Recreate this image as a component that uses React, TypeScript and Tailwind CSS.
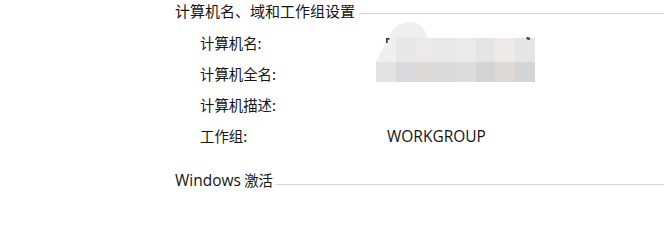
import React from "react";

const rows = [
  { label: "计算机名:", value: "" },
  { label: "计算机全名:", value: "" },
  { label: "计算机描述:", value: "" },
  { label: "工作组:", value: "WORKGROUP" },
];

function Redacted() {
  const xs = [6, 26, 46, 66, 86, 106, 125, 145, 165];
  const r1 = ["#eeeeee", "#e8e8e8", "#ebe9e9", "#e9e9ea", "#eaeaea", "#e4e6e6", "#eeeae9", "#e4e5e7"];
  const r2 = ["#e3e3e3", "#d9dadb", "#dcd9d8", "#d9dadc", "#dcdcdc", "#d3d5d5", "#ddd9d6", "#d3d6d9"];
  return (
    <svg className="absolute left-[370px] top-[20px]" width="170" height="65" viewBox="0 0 170 65">
      <path d="M6 42 L20 14 Q27 2 40 2 Q53 2 58 18 L58 42 Z" fill="#efefef" />
      {r1.map((c, i) =>
        i === 0 ? null : (
          <rect key={"a" + i} x={xs[i]} y={18} width={xs[i + 1] - xs[i]} height={24} fill={c} />
        )
      )}
      {r2.map((c, i) => (
        <rect key={"b" + i} x={xs[i]} y={42} width={xs[i + 1] - xs[i]} height={20} fill={c} />
      ))}
      <rect x="16" y="18" width="3.5" height="1.6" fill="#333" />
      <rect x="16" y="18" width="1.6" height="5" fill="#333" />
      <path d="M156 17.5 Q158 16.5 160 18 L160 20 L157 19.5 Z" fill="#444" />
    </svg>
  );
}

export default function App() {
  return (
    <div
      className="relative w-[664px] h-[200px] bg-white overflow-hidden pl-[175px] text-[#141414]"
      style={{ fontFamily: "'Noto Sans CJK SC', sans-serif" }}
    >
      <div className="flex items-center h-[20px] text-[15px] leading-none">
        <span className="whitespace-nowrap">计算机名、域和工作组设置</span>
        <div className="flex-1 h-px bg-[#d4d4d4] ml-[4px] mt-[6px]" />
      </div>
      <div className="mt-[8px] pl-[25px] text-[14.4px] leading-none">
        {rows.map((r) => (
          <div key={r.label} className="flex items-center h-[31px]">
            <span className="w-[187px] whitespace-nowrap">{r.label}</span>
            <span className="whitespace-nowrap font-['Open_Sans',sans-serif] text-[15.5px]">{r.value}</span>
          </div>
        ))}
      </div>
      <div className="flex items-center h-[20px] mt-[19px] text-[14.4px] leading-none">
        <span className="whitespace-nowrap">
          <span className="font-['Open_Sans',sans-serif] text-[15.5px]">Windows</span> 激活
        </span>
        <div className="flex-1 h-px bg-[#d4d4d4] ml-[3px] mt-[6px]" />
      </div>
      <Redacted />
    </div>
  );
}
